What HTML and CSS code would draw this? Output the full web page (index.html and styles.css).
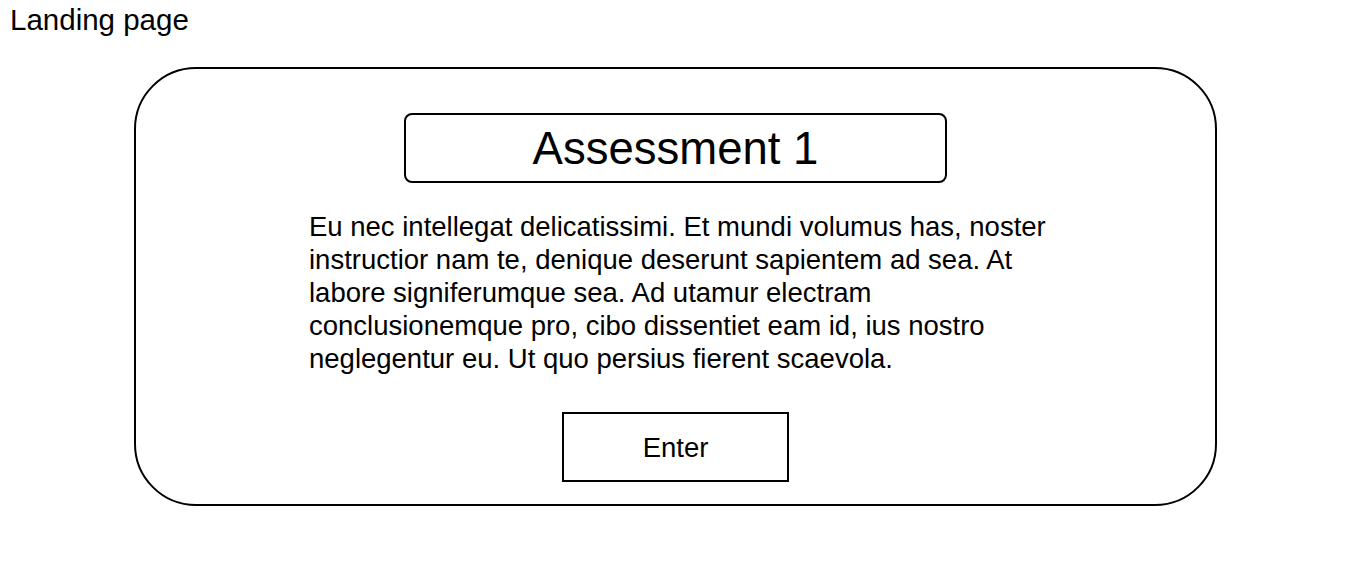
FILE: index.html
```html
<!DOCTYPE html>
<html>
<head>
<meta charset="utf-8">
<link rel="stylesheet" href="styles.css">
</head>
<body>
<div class="page-label">Landing page</div>
<div class="card">
  <div class="title-box">Assessment 1</div>
  <p class="intro">Eu nec intellegat delicatissimi. Et mundi volumus has, noster instructior nam te, denique deserunt sapientem ad sea. At labore signiferumque sea. Ad utamur electram conclusionemque pro, cibo dissentiet eam id, ius nostro neglegentur eu. Ut quo persius fierent scaevola.</p>
  <div class="enter-btn">Enter</div>
</div>
</body>
</html>
```
FILE: styles.css
```css
html, body {
  margin: 0;
  padding: 0;
  background: #fff;
}
body {
  font-family: "Liberation Sans", Arial, sans-serif;
  color: #000;
  width: 1361px;
  height: 564px;
  overflow: hidden;
}
.page-label {
  box-sizing: border-box;
  font-size: 29.5px;
  line-height: 34px;
  padding: 3px 0 0 10px;
  height: 40px;
}
.card {
  box-sizing: border-box;
  margin: 27px 0 0 134px;
  width: 1083px;
  height: 439px;
  border: 2px solid #000;
  border-radius: 62px;
  display: flex;
  flex-direction: column;
  align-items: center;
  padding-top: 44px;
}
.title-box {
  box-sizing: border-box;
  width: 543px;
  height: 70px;
  border: 2px solid #000;
  border-radius: 8px;
  font-size: 45.5px;
  line-height: 68px;
  text-align: center;
}
.intro {
  align-self: flex-start;
  margin: 27px 0 0 173px;
  width: 750px;
  font-size: 27.5px;
  line-height: 33px;
}
.enter-btn {
  box-sizing: border-box;
  margin-top: 37px;
  width: 227px;
  height: 70px;
  border: 2px solid #000;
  font-size: 27.5px;
  line-height: 68px;
  text-align: center;
}
```
